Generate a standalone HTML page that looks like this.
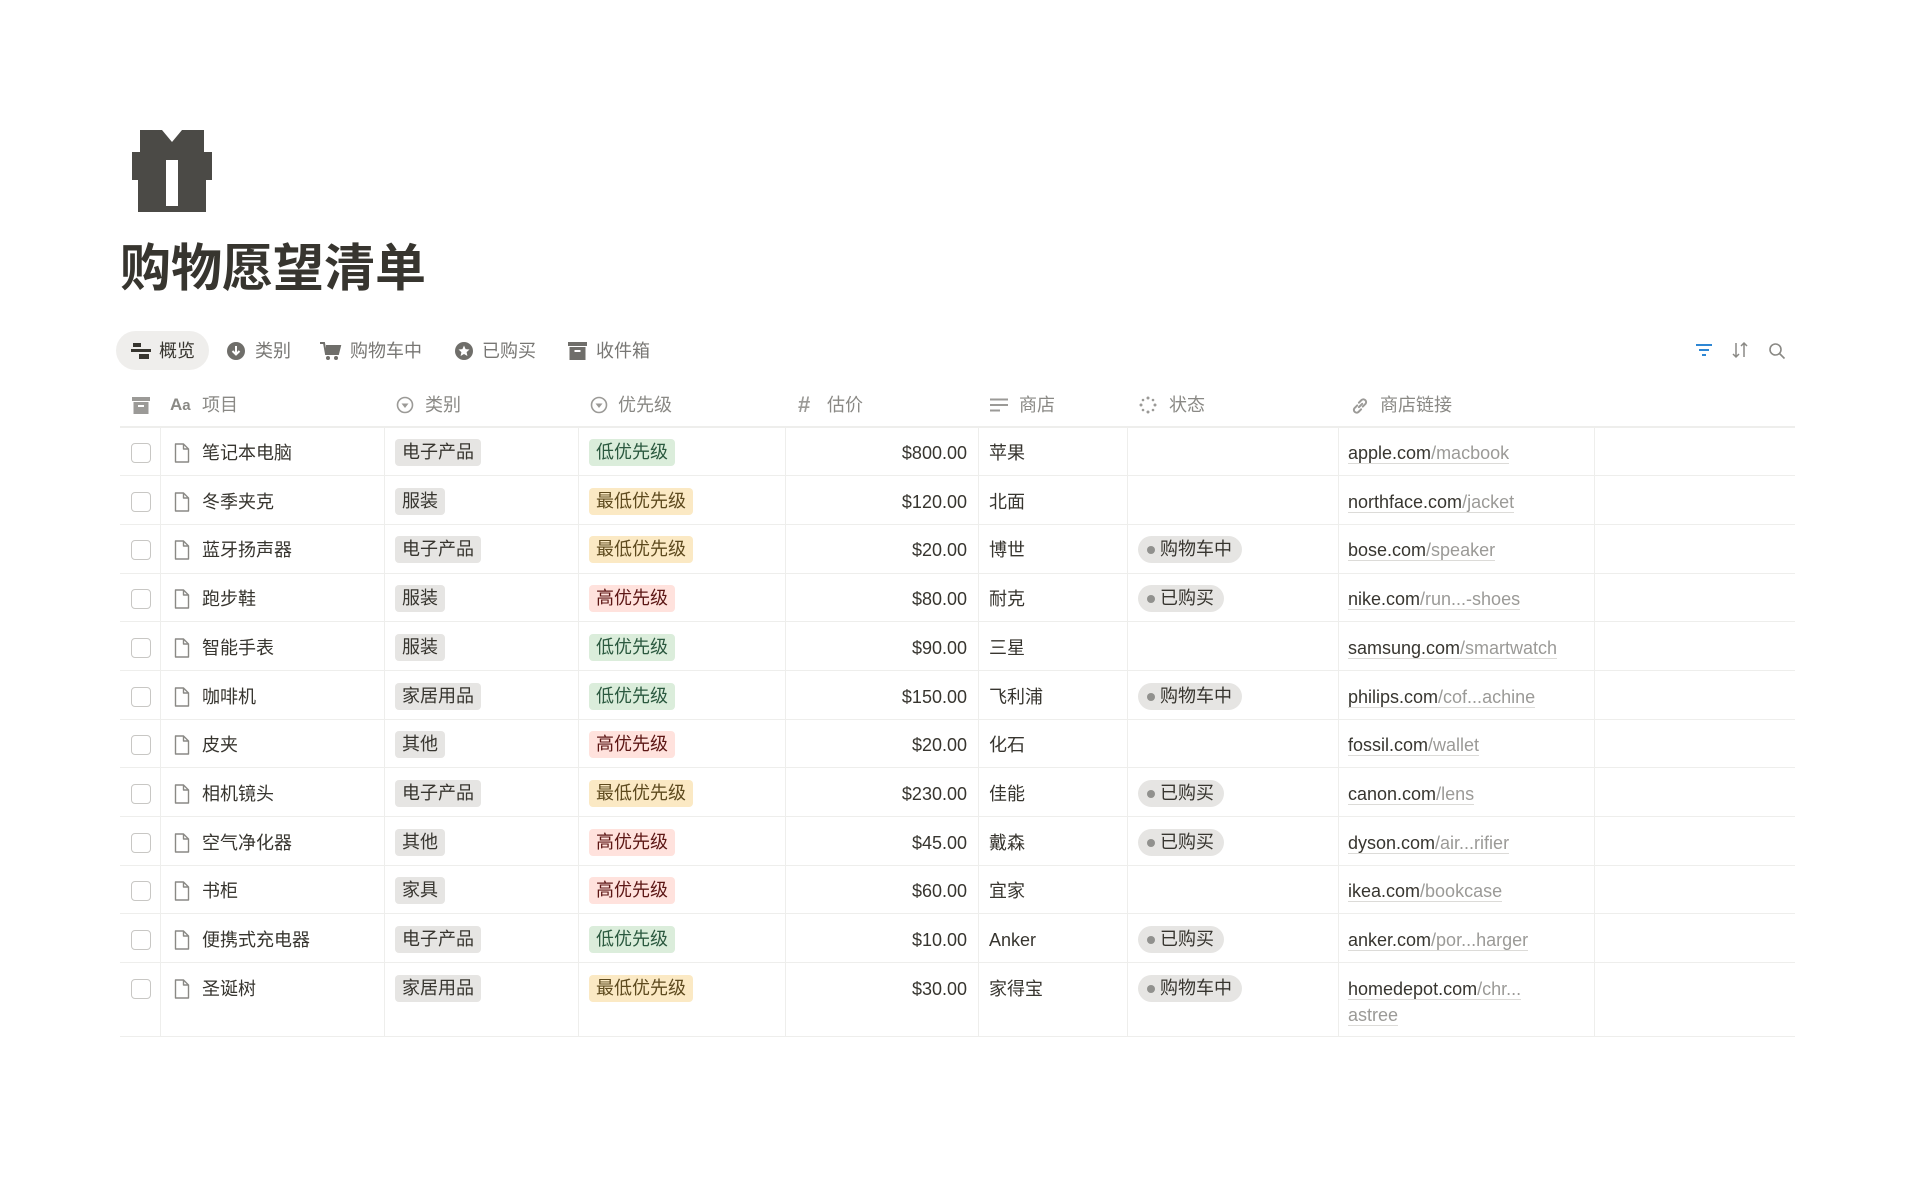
<!DOCTYPE html>
<html><head><meta charset="utf-8">
<style>
*{margin:0;padding:0;box-sizing:border-box}
body{width:1920px;height:1199px;background:#fff;font-family:"Liberation Sans","Noto Sans CJK SC",sans-serif;color:#37352f;position:relative;overflow:hidden;font-size:18px}
.a{position:absolute;white-space:nowrap}
.title{left:120px;top:236px;font-size:51px;font-weight:700;line-height:66px;color:#37352f}
.tab{top:336px;height:30px;line-height:30px;color:#787774;font-size:18px}
.pill{left:116px;top:331px;width:93px;height:39px;border-radius:20px;background:#efeeec}
.hd{top:392px;line-height:26px;color:#8a8985;font-size:18px}
.hl{position:absolute;height:2px;background:#eeeeec;left:120px;width:1675px}
.vl{position:absolute;width:1px;background:#eeeeec;top:427px;height:610px}
.t{position:absolute;height:27px;line-height:27px;padding:0 7px;border-radius:4px;font-size:18px;white-space:nowrap}
.g{background:#e6e5e3;color:#37352f}
.gr{background:#dbeddb;color:#2b593f}
.y{background:#fbe9c4;color:#5e4a1e}
.r{background:#ffe2dd;color:#5d1715}
.st{position:absolute;height:27px;line-height:27px;padding:0 10px 0 22px;border-radius:14px;background:#e6e5e3;color:#37352f;font-size:18px;white-space:nowrap}
.st:before{content:"";position:absolute;left:9px;top:10px;width:8px;height:8px;border-radius:50%;background:#91918e}
.cb{position:absolute;left:131px;width:20px;height:20px;border:1.5px solid #c8c7c4;border-radius:4px}
.lk{position:absolute;left:1348px;font-size:18px;line-height:26px;color:#37352f}
.lk span.p{color:#9b9a97}
.lk .u{border-bottom:1.5px solid #dcdbd8}
</style></head><body>

<svg class="a" style="left:132px;top:130px" width="80" height="82" viewBox="0 0 80 82">
<path d="M8 0 L30 0 L40 12 L50 0 L72 0 L72 22 L80 22 L80 50 L74 50 L74 82 L6 82 L6 50 L0 50 L0 22 L8 22 Z" fill="#4b4a46"/>
<rect x="34" y="30" width="12" height="46" fill="#fff"/>
</svg>

<div class="a title">购物愿望清单</div>

<div class="a pill"></div>
<svg class="a" style="left:131px;top:342px" width="20" height="18" viewBox="0 0 20 18"><rect x="2" y="1" width="8" height="4" fill="#37352f"/><rect x="0" y="7" width="20" height="3" fill="#37352f"/><rect x="8" y="12" width="10" height="5" fill="#37352f"/></svg>
<div class="a tab" style="left:159px;color:#37352f">概览</div>
<svg class="a" style="left:226px;top:341px" width="20" height="20" viewBox="0 0 20 20"><circle cx="10" cy="10" r="9" fill="#6f6e6a"/><path d="M10 5v8M6.5 10l3.5 3.5 3.5-3.5" stroke="#fff" stroke-width="2" fill="none"/></svg>
<div class="a tab" style="left:255px">类别</div>
<svg class="a" style="left:320px;top:341px" width="22" height="20" viewBox="0 0 22 20"><path d="M0 2h4l2 11h12l2-8H6" stroke="#6f6e6a" stroke-width="2" fill="none"/><rect x="6" y="5" width="13" height="7" fill="#6f6e6a"/><circle cx="8" cy="17" r="2" fill="#6f6e6a"/><circle cx="16" cy="17" r="2" fill="#6f6e6a"/></svg>
<div class="a tab" style="left:350px">购物车中</div>
<svg class="a" style="left:454px;top:341px" width="20" height="20" viewBox="0 0 20 20"><circle cx="10" cy="10" r="9" fill="#6f6e6a"/><path d="M10 4.5l1.6 3.6 3.9.4-2.9 2.6.8 3.9-3.4-2-3.4 2 .8-3.9-2.9-2.6 3.9-.4z" fill="#fff"/></svg>
<div class="a tab" style="left:482px">已购买</div>
<svg class="a" style="left:568px;top:342px" width="19" height="18" viewBox="0 0 19 18"><rect x="0" y="0" width="19" height="4" fill="#6f6e6a"/><rect x="1.5" y="5" width="16" height="13" fill="#6f6e6a"/><rect x="6.5" y="8" width="6" height="2" fill="#fff"/></svg>
<div class="a tab" style="left:596px">收件箱</div>

<svg class="a" style="left:1695px;top:342px" width="18" height="16" viewBox="0 0 18 16"><path d="M1 3h16M4 8h10M7 13h4" stroke="#2e87d4" stroke-width="2"/></svg>
<svg class="a" style="left:1731px;top:341px" width="18" height="18" viewBox="0 0 18 18"><path d="M5 2v14M2 13l3 3 3-3M13 16V2M10 5l3-3 3 3" stroke="#8a8985" stroke-width="1.5" fill="none"/></svg>
<svg class="a" style="left:1768px;top:342px" width="18" height="18" viewBox="0 0 18 18"><circle cx="7.5" cy="7.5" r="5.5" stroke="#8a8985" stroke-width="1.6" fill="none"/><path d="M11.5 11.5l5 5" stroke="#8a8985" stroke-width="1.6"/></svg>

<svg class="a" style="left:132px;top:397px" width="18" height="17" viewBox="0 0 18 17"><rect x="0" y="0" width="18" height="4" fill="#9b9a97"/><rect x="1.5" y="5" width="15" height="12" fill="#9b9a97"/><rect x="6" y="8" width="6" height="2" fill="#fff"/></svg>
<div class="a hd" style="left:170px;font-weight:700;font-size:17px">A<span style="font-size:15px">a</span></div>
<div class="a hd" style="left:202px">项目</div>
<svg class="a" style="left:396px;top:396px" width="18" height="18" viewBox="0 0 18 18"><circle cx="9" cy="9" r="7.5" stroke="#9b9a97" stroke-width="1.6" fill="none"/><path d="M5.5 7.5h7L9 12z" fill="#9b9a97"/></svg>
<div class="a hd" style="left:425px">类别</div>
<svg class="a" style="left:590px;top:396px" width="18" height="18" viewBox="0 0 18 18"><circle cx="9" cy="9" r="7.5" stroke="#9b9a97" stroke-width="1.6" fill="none"/><path d="M5.5 7.5h7L9 12z" fill="#9b9a97"/></svg>
<div class="a hd" style="left:618px">优先级</div>
<div class="a hd" style="left:798px;font-size:22px;font-weight:700;color:#9b9a97">#</div>
<div class="a hd" style="left:827px">估价</div>
<svg class="a" style="left:990px;top:398px" width="18" height="14" viewBox="0 0 18 14"><path d="M0 1.5h18M0 7h18M0 12.5h10" stroke="#9b9a97" stroke-width="2"/></svg>
<div class="a hd" style="left:1019px">商店</div>
<svg class="a" style="left:1139px;top:396px" width="18" height="18" viewBox="0 0 18 18" fill="#9b9a97"><circle cx="9" cy="2" r="1.5"/><circle cx="9" cy="16" r="1.5"/><circle cx="2" cy="9" r="1.5"/><circle cx="16" cy="9" r="1.5"/><circle cx="4" cy="4" r="1.3"/><circle cx="14" cy="14" r="1.3"/><circle cx="14" cy="4" r="1.3"/><circle cx="4" cy="14" r="1.3"/></svg>
<div class="a hd" style="left:1169px">状态</div>
<svg class="a" style="left:1350px;top:396px" width="20" height="20" viewBox="0 0 18 18"><path d="M8 10l3-3M6.5 8.5l-2.5 2.5a2.5 2.5 0 003.5 3.5l2.5-2.5M11.5 9.5l2.5-2.5a2.5 2.5 0 00-3.5-3.5L8 6" stroke="#9b9a97" stroke-width="1.8" fill="none" stroke-linecap="round"/></svg>
<div class="a hd" style="left:1380px">商店链接</div>

<div class="hl" style="top:426px"></div>
<div class="hl" style="top:475px;height:1px"></div>
<div class="hl" style="top:524px;height:1px"></div>
<div class="hl" style="top:573px;height:1px"></div>
<div class="hl" style="top:621px;height:1px"></div>
<div class="hl" style="top:670px;height:1px"></div>
<div class="hl" style="top:719px;height:1px"></div>
<div class="hl" style="top:767px;height:1px"></div>
<div class="hl" style="top:816px;height:1px"></div>
<div class="hl" style="top:865px;height:1px"></div>
<div class="hl" style="top:913px;height:1px"></div>
<div class="hl" style="top:962px;height:1px"></div>
<div class="hl" style="top:1036px;height:1px"></div>
<div class="vl" style="left:160px"></div>
<div class="vl" style="left:384px"></div>
<div class="vl" style="left:578px"></div>
<div class="vl" style="left:785px"></div>
<div class="vl" style="left:978px"></div>
<div class="vl" style="left:1127px"></div>
<div class="vl" style="left:1338px"></div>
<div class="vl" style="left:1594px"></div>

<div id="rows"></div>
<script>
var d=[
["笔记本电脑","电子产品","g","低优先级","gr","$800.00","苹果","","apple.com","/macbook"],
["冬季夹克","服装","g","最低优先级","y","$120.00","北面","","northface.com","/jacket"],
["蓝牙扬声器","电子产品","g","最低优先级","y","$20.00","博世","购物车中","bose.com","/speaker"],
["跑步鞋","服装","g","高优先级","r","$80.00","耐克","已购买","nike.com","/run...-shoes"],
["智能手表","服装","g","低优先级","gr","$90.00","三星","","samsung.com","/smartwatch"],
["咖啡机","家居用品","g","低优先级","gr","$150.00","飞利浦","购物车中","philips.com","/cof...achine"],
["皮夹","其他","g","高优先级","r","$20.00","化石","","fossil.com","/wallet"],
["相机镜头","电子产品","g","最低优先级","y","$230.00","佳能","已购买","canon.com","/lens"],
["空气净化器","其他","g","高优先级","r","$45.00","戴森","已购买","dyson.com","/air...rifier"],
["书柜","家具","g","高优先级","r","$60.00","宜家","","ikea.com","/bookcase"],
["便携式充电器","电子产品","g","低优先级","gr","$10.00","Anker","已购买","anker.com","/por...harger"],
["圣诞树","家居用品","g","最低优先级","y","$30.00","家得宝","购物车中","homedepot.com","/chr..."]];
var h="";
d.forEach(function(r,i){
 var c=440+i*48.7;
 var tt=c-1;
 h+='<div class="cb" style="top:'+(c+3)+'px"></div>';
 h+='<svg class="a" style="left:174px;top:'+(c+3)+'px" width="16" height="20" viewBox="0 0 16 20"><path d="M1.5 1h8l5 5v13h-13z M9.5 1v5h5" stroke="#8a8985" stroke-width="1.4" fill="none" stroke-linejoin="round"/></svg>';
 h+='<div class="a" style="left:202px;top:'+c+'px;line-height:26px">'+r[0]+'</div>';
 h+='<div class="t '+r[2]+'" style="left:395px;top:'+tt+'px">'+r[1]+'</div>';
 h+='<div class="t '+r[4]+'" style="left:589px;top:'+tt+'px">'+r[3]+'</div>';
 h+='<div class="a" style="right:'+(1920-967)+'px;top:'+c+'px;line-height:26px">'+r[5]+'</div>';
 h+='<div class="a" style="left:989px;top:'+c+'px;line-height:26px">'+r[6]+'</div>';
 if(r[7])h+='<div class="st" style="left:1138px;top:'+tt+'px">'+r[7]+'</div>';
 var ex=(i==11)?'<br><span class="p u">astree</span>':'';
 h+='<div class="lk" style="top:'+c+'px"><span class="u">'+r[8]+'</span><span class="p u">'+r[9]+'</span>'+ex+'</div>';
});
document.getElementById("rows").innerHTML=h;
</script>
</body></html>
